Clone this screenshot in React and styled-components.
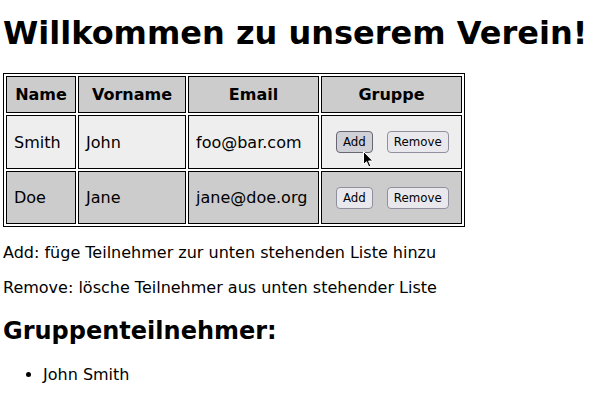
import React from "react";
import styled, { createGlobalStyle } from "styled-components";

const Global = createGlobalStyle`
  html, body { margin: 0; padding: 0; background: #fff; }
  body {
    font-family: "DejaVu Sans", sans-serif;
    font-size: 16px;
    color: #000;
    padding: 0 3px;
  }
`;

const Page = styled.div`
  display: flow-root;
`;

const Title = styled.h1`
  font-size: 32px;
  font-weight: bold;
  margin: 14px 0 21.44px;
  line-height: normal;
`;

const Table = styled.table`
  border: 1px solid #000;
  border-spacing: 2px;
  table-layout: fixed;
  width: 462px;
`;

const HeadCell = styled.th`
  box-sizing: border-box;
  width: ${(p) => p.$w}px;
  border: 1px solid #000;
  background: #cccccc;
  padding: 8px 7px;
  font-weight: bold;
  text-align: center;
`;

const Row = styled.tr`
  background: ${(p) => (p.$alt ? "#cccccc" : "#eeeeee")};
`;

const Cell = styled.td`
  border: 1px solid #000;
  padding: 7px;
  text-align: left;
`;

const GroupCell = styled(Cell)`
  position: relative;
  white-space: nowrap;
  font-size: 0;
`;

const Button = styled.button`
  font-family: "DejaVu Sans", sans-serif;
  font-size: 11.8px;
  line-height: normal;
  margin: 8px 7px 7.5px;
  padding: 3px 6px;
  color: #000;
  background: ${(p) => (p.$hover ? "#d0d0d7" : "#e9e9ed")};
  border: 1px solid ${(p) => (p.$hover ? "#676774" : "#8f8f9d")};
  border-radius: 4px;
  vertical-align: middle;
`;

const Cursor = styled.svg`
  position: absolute;
  left: 41px;
  top: 35px;
  pointer-events: none;
`;

const Text = styled.p`
  margin: 16px 0;
  line-height: normal;
`;

const Subtitle = styled.h2`
  font-size: 24px;
  font-weight: bold;
  margin: 19.92px 0;
  line-height: normal;
`;

const List = styled.ul`
  margin: 16px 0;
  padding-left: 40px;
  list-style: disc;
`;

const people = [
  { name: "Smith", first: "John", email: "foo@bar.com" },
  { name: "Doe", first: "Jane", email: "jane@doe.org" },
];

export default function App() {
  return (
    <Page>
      <Global />
      <Title>Willkommen zu unserem Verein!</Title>
      <Table>
        <thead>
          <tr>
            <HeadCell $w={70}>Name</HeadCell>
            <HeadCell $w={108}>Vorname</HeadCell>
            <HeadCell $w={131}>Email</HeadCell>
            <HeadCell $w={141}>Gruppe</HeadCell>
          </tr>
        </thead>
        <tbody>
          {people.map((p, i) => (
            <Row key={p.email} $alt={i % 2 === 1}>
              <Cell>{p.name}</Cell>
              <Cell>{p.first}</Cell>
              <Cell>{p.email}</Cell>
              <GroupCell>
                <Button $hover={i === 0}>Add</Button>
                <Button>Remove</Button>
                {i === 0 && (
                  <Cursor width="12" height="17" viewBox="0 0 12 17">
                    <path
                      d="M0.5 0.5 L0.5 13.5 L3.5 10.7 L5.8 16 L7.8 15.1 L5.6 10 L9.8 10 Z"
                      fill="#000"
                      stroke="#fff"
                      strokeWidth="1"
                      strokeLinejoin="round"
                    />
                  </Cursor>
                )}
              </GroupCell>
            </Row>
          ))}
        </tbody>
      </Table>
      <Text>Add: füge Teilnehmer zur unten stehenden Liste hinzu</Text>
      <Text>Remove: lösche Teilnehmer aus unten stehender Liste</Text>
      <Subtitle>Gruppenteilnehmer:</Subtitle>
      <List>
        <li>John Smith</li>
      </List>
    </Page>
  );
}
